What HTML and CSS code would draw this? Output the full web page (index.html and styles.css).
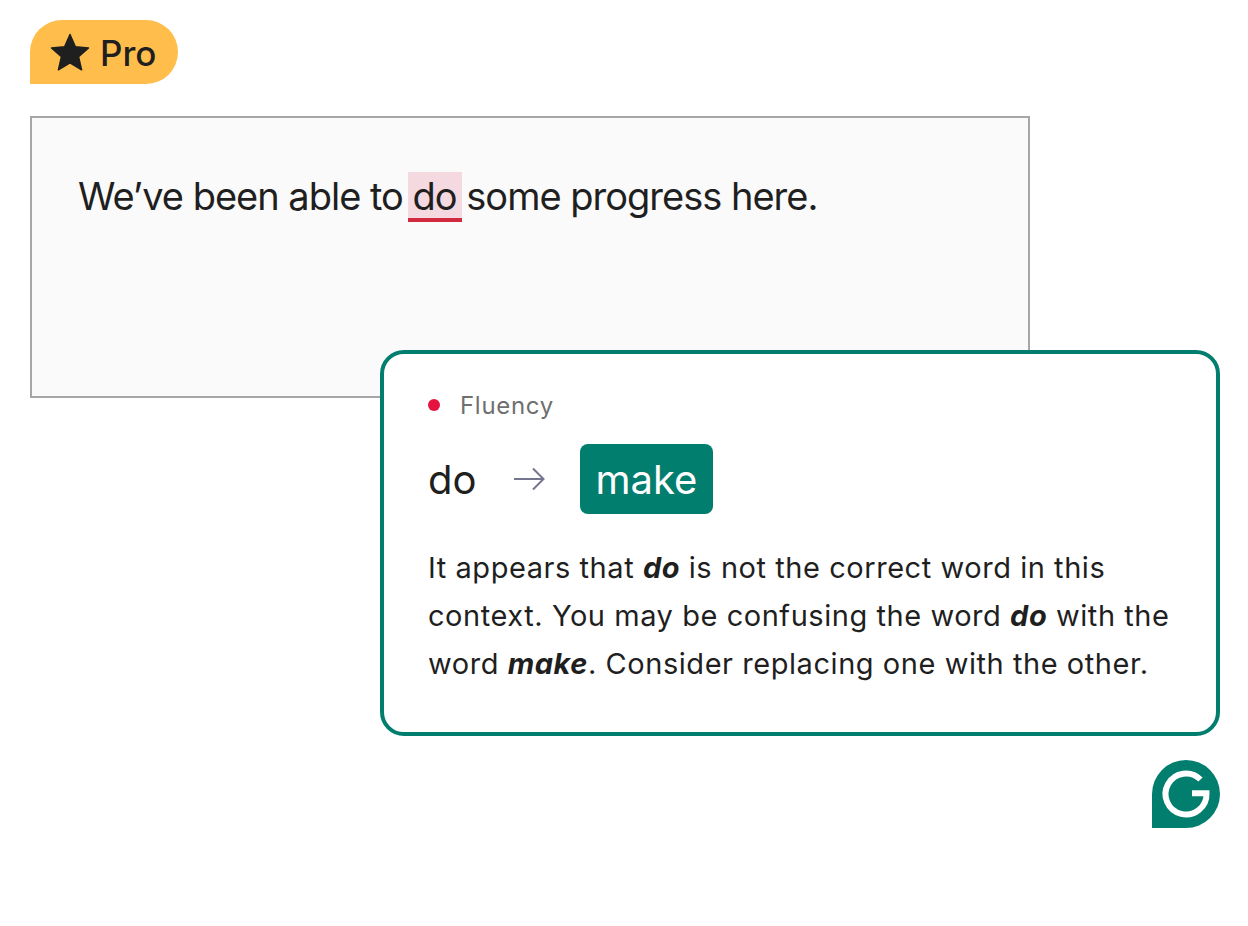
FILE: index.html
```html
<!DOCTYPE html>
<html>
	<head>
		<meta charset="UTF-8">
		<title>Fluency</title>
		<link rel="stylesheet" href="styles.css">
	</head>
	<body>
		<div class="wrap">
			<div class="badge">
				<svg class="star" viewBox="0 0 40 38" width="40" height="38">
					<path d="M20 1.500l5.400 12.300 13.100 1.200-9.900 8.800 3 13-11.600-6.900-11.600 6.900 3-13-9.900-8.800 13.100-1.200z" fill="#1f1f1f" stroke="#1f1f1f" stroke-width="1.500" stroke-linejoin="round"/>
				</svg>
				<span class="pro">Pro</span>
			</div>
			<div class="editor">
				<p>We’ve been able to <span class="mark">do</span> some progress here.</p>
			</div>
			<div class="card">
				<div class="tag"><i class="dot"></i><span>Fluency</span></div>
				<div class="swap">
					<span class="old">do</span>
					<svg class="arrow" viewBox="0 0 32 24" width="32" height="24">
						<path d="M1 12h29M20 1.500L30.500 12 20 22.500" fill="none" stroke="#75758f" stroke-width="2"/>
					</svg>
					<span class="new">make</span>
				</div>
				<p class="desc">It appears that <b>do</b> is not the correct word in this context. You may be confusing the word <b>do</b> with the word <b>make</b>. Consider replacing one with the other.</p>
			</div>
			<div class="foot">
				<svg class="logo" viewBox="0 0 68 68" width="68" height="68">
					<path d="M0 68V34a34 34 0 1 1 34 34z" fill="#027e6f"/>
					<path d="M48.500 19.500A20.500 20.500 0 1 0 54.500 33.300H40" fill="none" stroke="#fff" stroke-width="6"/>
				</svg>
			</div>
		</div>
	</body>
</html>
```

FILE: styles.css
```css
body,
p {
    margin: 0;
    padding: 0;
}

body {
    background: #fff;
    font-family: Inter, "Liberation Sans", sans-serif;
    color: #1f1f1f;
}

.wrap {
    padding: 20px 28px 0 30px;
}

.badge {
    display: flex;
    align-items: center;
    width: 148px;
    height: 64px;
    box-sizing: border-box;
    padding-left: 20px;
    background: #ffbe4c;
    border-radius: 32px 32px 32px 0;
    font-size: 35px;
    font-weight: 500;
}

.star {
    margin-right: 10px;
}

.pro {
    padding-top: 2px;
}

.editor {
    width: 1000px;
    height: 282px;
    margin-top: 32px;
    box-sizing: border-box;
    padding: 54px 46px;
    background: #fafafa;
    border: 2px solid #a6a6a6;
    font-size: 38px;
    line-height: 48px;
    letter-spacing: -1px;
}

.mark {
    display: inline-block;
    padding: 0 5px;
    margin: 0 -5px;
    height: 46px;
    background: #f5d9e1;
    border-bottom: 4px solid #d1293d;
}

.card {
    position: relative;
    margin: -48px 0 0 350px;
    height: 386px;
    box-sizing: border-box;
    padding: 30px 44px;
    background: #fff;
    border: 4px solid #027e6f;
    border-radius: 24px;
}

.tag {
    display: flex;
    align-items: center;
    height: 42px;
    font-size: 24px;
    color: #6f6f6f;
    letter-spacing: 0.7px;
}

.dot {
    width: 12px;
    height: 12px;
    border-radius: 50%;
    background: #e5133d;
    margin-right: 20px;
}

.swap {
    display: flex;
    align-items: center;
    margin-top: 18px;
    font-size: 40px;
}

.old {
    width: 85px;
}

.arrow {
    margin-right: 35px;
}

.new {
    width: 133px;
    height: 70px;
    line-height: 72px;
    text-align: center;
    background: #027e6f;
    border-radius: 8px;
    color: #fff;
}

.desc {
    margin-top: 30px;
    font-size: 29px;
    line-height: 48px;
    letter-spacing: 0.55px;
}

.desc b {
    font-style: italic;
}

.foot {
    display: flex;
    justify-content: flex-end;
    margin-top: 24px;
}
```
